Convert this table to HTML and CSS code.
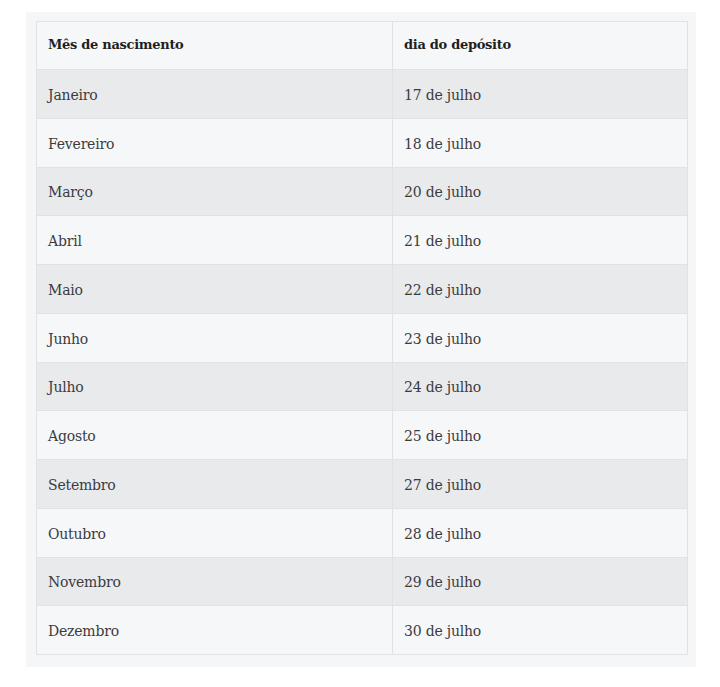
FILE: index.html
```html
<!DOCTYPE html>
<html lang="pt">
<head>
<meta charset="utf-8">
<title>Calendário</title>
<link rel="stylesheet" href="styles.css">
</head>
<body>
<div class="wrap">
  <table class="dates">
    <thead>
      <tr><th>Mês de nascimento</th><th>dia do depósito</th></tr>
    </thead>
    <tbody>
      <tr><td>Janeiro</td><td>17 de julho</td></tr>
      <tr><td>Fevereiro</td><td>18 de julho</td></tr>
      <tr><td>Março</td><td>20 de julho</td></tr>
      <tr><td>Abril</td><td>21 de julho</td></tr>
      <tr><td>Maio</td><td>22 de julho</td></tr>
      <tr><td>Junho</td><td>23 de julho</td></tr>
      <tr><td>Julho</td><td>24 de julho</td></tr>
      <tr><td>Agosto</td><td>25 de julho</td></tr>
      <tr><td>Setembro</td><td>27 de julho</td></tr>
      <tr><td>Outubro</td><td>28 de julho</td></tr>
      <tr><td>Novembro</td><td>29 de julho</td></tr>
      <tr><td>Dezembro</td><td>30 de julho</td></tr>
    </tbody>
  </table>
</div>
</body>
</html>
```
FILE: styles.css
```css
html, body {
  margin: 0;
  padding: 0;
  background: #ffffff;
}
body {
  padding: 12px 24px 0 26px;
  font-family: "DejaVu Serif", "Liberation Serif", serif;
}
.wrap {
  width: 670px;
  box-sizing: border-box;
  background: #f5f6f8;
  padding: 9px 8px 12px 10px;
}
.dates {
  width: 652px;
  border-collapse: collapse;
  table-layout: fixed;
  border: 1px solid #e1e2e4;
}
.dates th,
.dates td {
  text-align: left;
  border-right: 1px solid #e1e2e4;
  vertical-align: middle;
}
.dates th:first-child,
.dates td:first-child {
  width: 332px;
}
.dates th {
  height: 44px;
  padding: 0 12px 3px 11px;
  font-size: 13px;
  font-weight: bold;
  letter-spacing: -0.3px;
  color: #1f1f22;
  background: #f6f7f9;
  border-bottom: 1px solid #e1e2e4;
}
.dates td {
  height: 45.75px;
  padding: 2px 12px 0 11px;
  font-size: 14px;
  letter-spacing: -0.2px;
  color: #3b3b3f;
  border-bottom: 1px solid #e1e2e4;
}
.dates tbody tr:nth-child(odd) td {
  background: #e9eaec;
}
.dates tbody tr:nth-child(even) td {
  background: #f6f7f9;
}
```
